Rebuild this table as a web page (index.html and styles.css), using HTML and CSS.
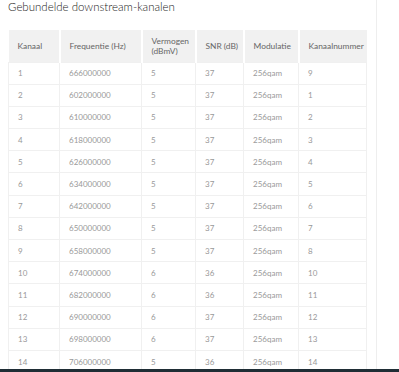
FILE: index.html
```html
<!DOCTYPE html>
<html lang="nl">
<head>
    <meta charset="UTF-8">
    <meta name="viewport" content="width=device-width, initial-scale=1.0">
    <title>Gebundelde downstream-kanalen</title>
    <link rel="stylesheet" href="styles.css">
</head>
<body>
    <div class="page">
        <main class="content">
            <h2 class="title">Gebundelde downstream-kanalen</h2>
            <table class="channels">
                <colgroup>
                    <col style="width: 51px">
                    <col style="width: 82px">
                    <col style="width: 54px">
                    <col style="width: 48px">
                    <col style="width: 55px">
                    <col style="width: 68px">
                </colgroup>
                <thead>
                    <tr>
                        <th>Kanaal</th>
                        <th>Frequentie (Hz)</th>
                        <th>Vermogen<br>(dBmV)</th>
                        <th>SNR (dB)</th>
                        <th>Modulatie</th>
                        <th>Kanaalnummer</th>
                    </tr>
                </thead>
                <tbody id="rows"></tbody>
            </table>
        </main>
        <aside class="side"></aside>
    </div>
    <footer class="bottom-bar"></footer>

    <script>
        const channels = [
            [1, 666000000, 5, 37, 9],
            [2, 602000000, 5, 37, 1],
            [3, 610000000, 5, 37, 2],
            [4, 618000000, 5, 37, 3],
            [5, 626000000, 5, 37, 4],
            [6, 634000000, 5, 37, 5],
            [7, 642000000, 5, 37, 6],
            [8, 650000000, 5, 37, 7],
            [9, 658000000, 5, 37, 8],
            [10, 674000000, 6, 36, 10],
            [11, 682000000, 6, 36, 11],
            [12, 690000000, 6, 37, 12],
            [13, 698000000, 6, 37, 13],
            [14, 706000000, 5, 36, 14]
        ];

        const rows = document.getElementById('rows');
        channels.forEach(([ch, freq, power, snr, num]) => {
            rows.innerHTML += `
                <tr>
                    <td>${ch}</td>
                    <td>${freq}</td>
                    <td>${power}</td>
                    <td>${snr}</td>
                    <td>256qam</td>
                    <td>${num}</td>
                </tr>
            `;
        });
    </script>
</body>
</html>
```

FILE: styles.css
```css
* {
    margin: 0;
    padding: 0;
    box-sizing: border-box;
}

body {
    font-family: Lato, "Open Sans", sans-serif;
    background: #fff;
    color: #555;
    overflow: hidden;
}

.page {
    display: flex;
    min-height: 372px;
}

.content {
    width: 377px;
    padding: 0 10px 0 8px;
    border-right: 1px solid #eee;
}

.side {
    flex: 1;
}

.title {
    font-size: 11.5px;
    font-weight: 300;
    color: #222;
    line-height: 14px;
    margin-bottom: 16px;
}

.channels {
    width: 358px;
    table-layout: fixed;
    border-collapse: collapse;
    font-size: 8px;
}

.channels th {
    height: 32px;
    background: #f1f1f1;
    border-left: 2px solid #fff;
    color: #666;
    font-size: 8.4px;
    font-weight: 400;
    text-align: left;
    padding: 0 6px 0 9px;
    line-height: 10px;
    white-space: nowrap;
}

.channels th:first-child {
    border-left: none;
}

.channels td {
    height: 22.2px;
    padding: 0 9px;
    border: 1px solid #f0f0f0;
    color: #999;
}

.bottom-bar {
    position: fixed;
    left: 0;
    right: 0;
    bottom: 0;
    height: 3px;
    background: #1f2d35;
}
```
